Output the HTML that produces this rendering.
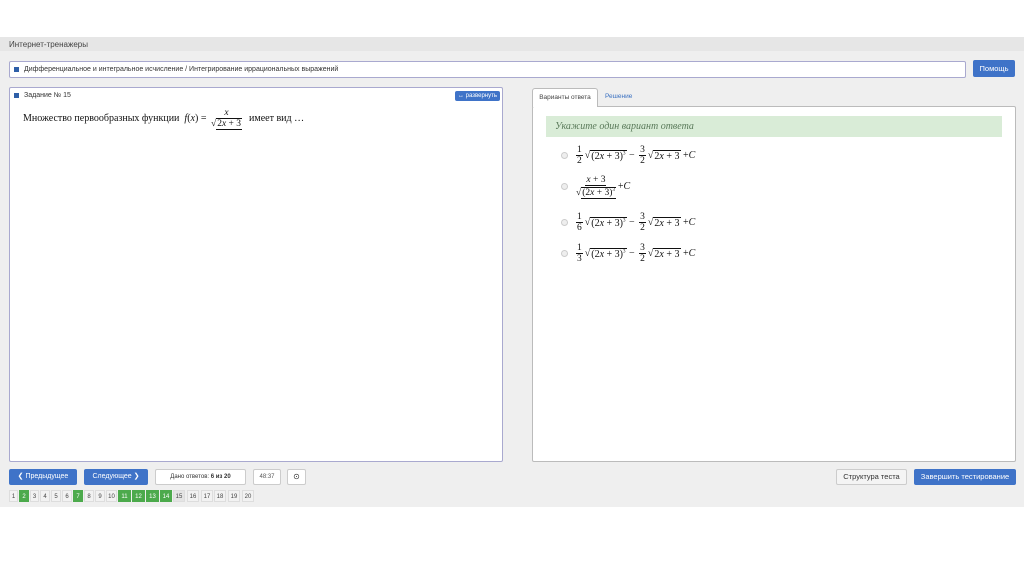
<!DOCTYPE html>
<html><head><meta charset="utf-8"><style>
*{box-sizing:border-box;margin:0;padding:0}
body{width:1024px;height:574px;background:#fff;font-family:"Liberation Sans",sans-serif;position:relative;overflow:hidden}
.abs{position:absolute}
.gray{left:0;top:37px;width:1024px;height:470px;background:#efefef}
.hdr{left:0;top:37px;width:1024px;height:14px;background:#e6e6e6;font-size:8px;color:#444;padding:3px 9px}
.box{background:#fff;border:1px solid #a9a9cf;border-radius:2px}
.sq{display:inline-block;width:5px;height:5px;background:#2e5fa8;margin-right:5px;vertical-align:middle}
.btn{background:#3f73c8;color:#fff;border-radius:2px;font-size:7px;text-align:center;white-space:nowrap}
.m{font-family:"Liberation Serif",serif;font-size:10px;color:#111;white-space:nowrap}
.fr{display:inline-flex;flex-direction:column;align-items:center;vertical-align:middle;font-size:9.5px;line-height:10px;margin:0 2px}
.fr span:first-child{border-bottom:1px solid #111;padding:0 1px}
.sqrt{border-top:1px solid #111;padding:0 1px}
.opt{left:561px;display:flex;align-items:center}
.rad{width:7px;height:7px;border-radius:50%;border:1px solid #ccc;background:#eee;margin-right:6px}
.pg{position:absolute;top:490px;height:12px;font-size:6px;line-height:12px;text-align:center;color:#444;background:#f2f2f2;border:1px solid #ddd}
.pg.g{background:#4caa4c;color:#fff;border-color:#4caa4c}
</style></head><body>
<div class="abs gray"></div>
<div class="abs hdr">Интернет-тренажеры</div>
<div class="abs box" style="left:9px;top:61px;width:957px;height:17px;font-size:7px;line-height:9px;color:#333;padding:3px 4px"><span class="sq"></span>Дифференциальное и интегральное исчисление / Интегрирование иррациональных выражений</div>
<div class="abs btn" style="left:973px;top:60px;width:42px;height:17px;line-height:17px;font-size:7.5px">Помощь</div>
<div class="abs box" style="left:9px;top:87px;width:494px;height:375px">
 <div style="font-size:7px;color:#333;padding:4px 4px"><span class="sq"></span>Задание № 15</div>
 <div class="abs btn" style="left:445px;top:3px;width:45px;height:10px;line-height:10px;font-size:6px">↔ развернуть</div>
 <div class="abs m" style="left:13px;top:20px;display:flex;align-items:center">Множество первообразных функции&nbsp;&nbsp;<i>f</i>(<i>x</i>) =&nbsp;<span class="fr"><span><i>x</i></span><span>√<span class="sqrt">2<i>x</i> + 3</span></span></span>&nbsp;&nbsp;имеет вид …</div>
</div>
<div class="abs" style="left:532px;top:88px;width:66px;height:19px;background:#fff;border:1px solid #bbb;border-bottom:none;border-radius:3px 3px 0 0;font-size:6.5px;color:#444;padding:5px 0;text-align:center;white-space:nowrap;z-index:2">Варианты ответа</div>
<div class="abs" style="left:605px;top:93px;font-size:6.5px;color:#3a70c0">Решение</div>
<div class="abs box" style="left:532px;top:106px;width:484px;height:356px;border-color:#bbb"></div>
<div class="abs" style="left:546px;top:116px;width:456px;height:21px;background:#d9ecd7;font-family:'Liberation Serif',serif;font-style:italic;font-size:10px;color:#5a7a5a;padding:5px 9px">Укажите один вариант ответа</div>
<div class="abs opt m" style="top:145px"><span class="rad"></span><span class="fr"><span>1</span><span>2</span></span>√<span class="sqrt">(2<i>x</i> + 3)<sup style="font-size:5px">3</sup></span>&nbsp;−&nbsp;<span class="fr"><span>3</span><span>2</span></span>√<span class="sqrt">2<i>x</i> + 3</span>&nbsp;+ <i>C</i></div>
<div class="abs opt m" style="top:175px"><span class="rad"></span><span class="fr"><span><i>x</i> + 3</span><span>√<span class="sqrt">(2<i>x</i> + 3)<sup style="font-size:5px">3</sup></span></span></span>+ <i>C</i></div>
<div class="abs opt m" style="top:212px"><span class="rad"></span><span class="fr"><span>1</span><span>6</span></span>√<span class="sqrt">(2<i>x</i> + 3)<sup style="font-size:5px">3</sup></span>&nbsp;−&nbsp;<span class="fr"><span>3</span><span>2</span></span>√<span class="sqrt">2<i>x</i> + 3</span>&nbsp;+ <i>C</i></div>
<div class="abs opt m" style="top:243px"><span class="rad"></span><span class="fr"><span>1</span><span>3</span></span>√<span class="sqrt">(2<i>x</i> + 3)<sup style="font-size:5px">3</sup></span>&nbsp;−&nbsp;<span class="fr"><span>3</span><span>2</span></span>√<span class="sqrt">2<i>x</i> + 3</span>&nbsp;+ <i>C</i></div>
<div class="abs btn" style="left:9px;top:469px;width:68px;height:16px;line-height:16px">❮ Предыдущее</div>
<div class="abs btn" style="left:84px;top:469px;width:64px;height:16px;line-height:16px">Следующее ❯</div>
<div class="abs box" style="left:155px;top:469px;width:91px;height:16px;border-color:#ccc;font-size:6px;line-height:14px;text-align:center;color:#333">Дано ответов: <b>6 из 20</b></div>
<div class="abs box" style="left:253px;top:469px;width:28px;height:16px;border-color:#ccc;font-size:6px;line-height:14px;text-align:center;color:#555">48:37</div>
<div class="abs box" style="left:287px;top:469px;width:19px;height:16px;border-color:#ccc;font-size:8px;line-height:14px;text-align:center;color:#333">⊙</div>
<div class="abs" style="left:836px;top:469px;width:71px;height:16px;background:#f4f4f4;border:1px solid #ccc;border-radius:2px;font-size:7.5px;line-height:14px;text-align:center;color:#333">Структура теста</div>
<div class="abs btn" style="left:914px;top:469px;width:102px;height:16px;line-height:16px;font-size:7.5px">Завершить тестирование</div>
<div class="pg" style="left:9px;width:9px">1</div><div class="pg g" style="left:19px;width:10px">2</div><div class="pg" style="left:30px;width:9px">3</div><div class="pg" style="left:40px;width:10px">4</div><div class="pg" style="left:51px;width:10px">5</div><div class="pg" style="left:62px;width:10px">6</div><div class="pg g" style="left:73px;width:10px">7</div><div class="pg" style="left:84px;width:10px">8</div><div class="pg" style="left:95px;width:10px">9</div><div class="pg" style="left:106px;width:11px">10</div><div class="pg g" style="left:118px;width:13px">11</div><div class="pg g" style="left:132px;width:13px">12</div><div class="pg g" style="left:146px;width:13px">13</div><div class="pg g" style="left:160px;width:12px">14</div><div class="pg" style="left:173px;width:12px;background:#e4e4e4">15</div><div class="pg" style="left:187px;width:12px">16</div><div class="pg" style="left:201px;width:12px">17</div><div class="pg" style="left:214px;width:12px">18</div><div class="pg" style="left:228px;width:12px">19</div><div class="pg" style="left:242px;width:12px">20</div>
</body></html>
